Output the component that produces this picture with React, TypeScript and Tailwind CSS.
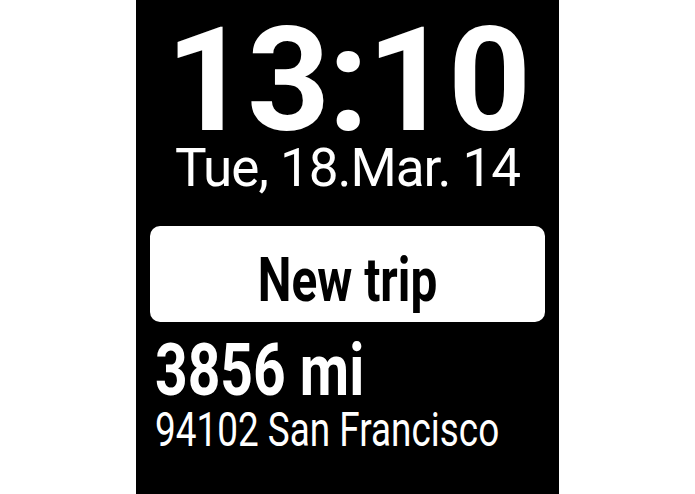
export default function App() {
  return (
    <div className="min-h-[494px] w-full bg-white">
      <div className="mx-auto flex h-[494px] w-[423px] flex-col bg-black text-white">
        <div className="pt-[10px] text-center font-['Roboto',sans-serif] text-[145px] font-bold leading-[140px] tracking-[-2px]">
          13:10
        </div>
        <div className="whitespace-nowrap text-center font-['Roboto',sans-serif] text-[53px] leading-[37px] tracking-[-1px]">
          Tue, 18.Mar. 14
        </div>
        <div className="mx-[14px] mt-[39px] h-[96px] rounded-[10px] bg-white pt-[11px] text-center font-['Roboto',sans-serif] text-[62px] font-bold leading-[85px] text-black">
          <span className="inline-block origin-center scale-x-[0.77] whitespace-nowrap">New trip</span>
        </div>
        <div className="pl-[19px] font-['Roboto',sans-serif] text-[73px] font-bold leading-[97px]">
          <span className="inline-block origin-left scale-x-[0.78] whitespace-nowrap">3856 mi</span>
        </div>
        <div className="pl-[19px] font-['Roboto',sans-serif] text-[49px] leading-[22px]">
          <span className="inline-block origin-left scale-x-[0.753] whitespace-nowrap">94102 San Francisco</span>
        </div>
      </div>
    </div>
  );
}
